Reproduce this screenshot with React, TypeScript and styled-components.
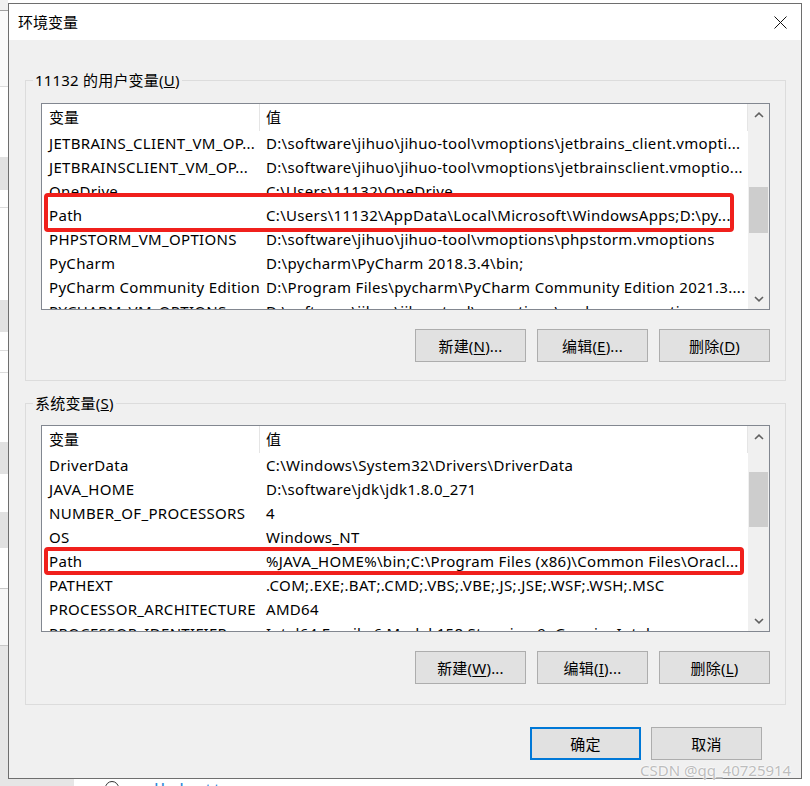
import React from "react";
import styled, { createGlobalStyle } from "styled-components";

type EnvVar = { name: string; value: string };

const userVars: EnvVar[] = [
  { name: "JETBRAINS_CLIENT_VM_OP...", value: "D:\\software\\jihuo\\jihuo-tool\\vmoptions\\jetbrains_client.vmopti..." },
  { name: "JETBRAINSCLIENT_VM_OP...", value: "D:\\software\\jihuo\\jihuo-tool\\vmoptions\\jetbrainsclient.vmoptio..." },
  { name: "OneDrive", value: "C:\\Users\\11132\\OneDrive" },
  { name: "Path", value: "C:\\Users\\11132\\AppData\\Local\\Microsoft\\WindowsApps;D:\\py..." },
  { name: "PHPSTORM_VM_OPTIONS", value: "D:\\software\\jihuo\\jihuo-tool\\vmoptions\\phpstorm.vmoptions" },
  { name: "PyCharm", value: "D:\\pycharm\\PyCharm 2018.3.4\\bin;" },
  { name: "PyCharm Community Edition", value: "D:\\Program Files\\pycharm\\PyCharm Community Edition 2021.3...." },
  { name: "PYCHARM_VM_OPTIONS", value: "D:\\software\\jihuo\\jihuo-tool\\vmoptions\\pycharm.vmoptions" },
];

const systemVars: EnvVar[] = [
  { name: "DriverData", value: "C:\\Windows\\System32\\Drivers\\DriverData" },
  { name: "JAVA_HOME", value: "D:\\software\\jdk\\jdk1.8.0_271" },
  { name: "NUMBER_OF_PROCESSORS", value: "4" },
  { name: "OS", value: "Windows_NT" },
  { name: "Path", value: "%JAVA_HOME%\\bin;C:\\Program Files (x86)\\Common Files\\Oracl..." },
  { name: "PATHEXT", value: ".COM;.EXE;.BAT;.CMD;.VBS;.VBE;.JS;.JSE;.WSF;.WSH;.MSC" },
  { name: "PROCESSOR_ARCHITECTURE", value: "AMD64" },
  { name: "PROCESSOR_IDENTIFIER", value: "Intel64 Family 6 Model 158 Stepping 9, GenuineIntel" },
];

// strip of the window lying behind the dialog (left edge)
const backSegments = [
  { h: 10, c: "#f0f0f0" },
  { h: 1, c: "#a0a0a0" },
  { h: 75, c: "#fafafa" },
  { h: 1, c: "#dcdcdc" },
  { h: 70, c: "#ffffff" },
  { h: 33, c: "#e1e1e1" },
  { h: 17, c: "#ffffff" },
  { h: 1, c: "#dcdcdc" },
  { h: 92, c: "#ffffff" },
  { h: 32, c: "#e1e1e1" },
  { h: 18, c: "#ffffff" },
  { h: 1, c: "#dcdcdc" },
  { h: 21, c: "#ffffff" },
  { h: 1, c: "#dcdcdc" },
  { h: 69, c: "#ffffff" },
  { h: 32, c: "#e1e1e1" },
  { h: 38, c: "#ffffff" },
  { h: 36, c: "#e1e1e1" },
  { h: 40, c: "#ffffff" },
  { h: 1, c: "#c8c8c8" },
  { h: 56, c: "#f7f7f7" },
  { h: 1, c: "#c8c8c8" },
  { h: 170, c: "#e6e6e6" },
];

const GlobalStyle = createGlobalStyle`
  html, body {
    margin: 0;
    padding: 0;
    background: #ffffff;
  }
  body {
    font-family: "Noto Sans", "Noto Sans CJK SC", sans-serif;
    color: #000;
  }
`;

const Chevron = ({ up }: { up?: boolean }) => (
  <svg width="10" height="6" viewBox="0 0 10 6">
    <polyline
      points={up ? "1,5 5,1.2 9,5" : "1,1 5,4.8 9,1"}
      fill="none"
      stroke="#606060"
      strokeWidth="1.6"
    />
  </svg>
);

const CloseIcon = () => (
  <svg width="13" height="13" viewBox="0 0 13 13">
    <path d="M0.5 0.5 L12.5 12.5 M12.5 0.5 L0.5 12.5" stroke="#111" strokeWidth="1" />
  </svg>
);

interface VarListProps {
  rows: EnvVar[];
  thumbTop: number;
  thumbHeight: number;
}

const VarList = ({ rows, thumbTop, thumbHeight }: VarListProps) => (
  <List>
    <Table>
      <HeaderRow>
        <HeadCell>变量</HeadCell>
        <HeadCell>值</HeadCell>
      </HeaderRow>
      {rows.map((r) => (
        <Row key={r.name}>
          <NameCell>{r.name}</NameCell>
          <ValueCell>{r.value}</ValueCell>
        </Row>
      ))}
    </Table>
    <ScrollBar>
      <ArrowBtn>
        <Chevron up />
      </ArrowBtn>
      <Track>
        <Thumb $top={thumbTop} $height={thumbHeight} />
      </Track>
      <ArrowBtn>
        <Chevron />
      </ArrowBtn>
    </ScrollBar>
  </List>
);

const App = () => {
  return (
    <>
      <GlobalStyle />
      <Desktop>
        <BackStrip>
          {backSegments.map((s, i) => (
            <BackSegment key={i} $h={s.h} $c={s.c} />
          ))}
        </BackStrip>
        <BackBottom>
          <BackGray />
          <BackCircle />
          <BackLink>ollabottom</BackLink>
        </BackBottom>

        <Window>
          <TitleBar>
            <Title>环境变量</Title>
            <CloseIcon />
          </TitleBar>
          <Body>
            <Group $top={40} $padTop={22} $padBottom={18}>
              <GroupLabel>
                11132 的用户变量(<u>U</u>)
              </GroupLabel>
              <VarList rows={userVars} thumbTop={62} thumbHeight={46} />
              <ButtonRow>
                <Button>
                  新建(<u>N</u>)...
                </Button>
                <Button>
                  编辑(<u>E</u>)...
                </Button>
                <Button>
                  删除(<u>D</u>)
                </Button>
              </ButtonRow>
            </Group>
            <Group $top={22} $padTop={21} $padBottom={20}>
              <GroupLabel>
                系统变量(<u>S</u>)
              </GroupLabel>
              <VarList rows={systemVars} thumbTop={25} thumbHeight={55} />
              <ButtonRow>
                <Button>
                  新建(<u>W</u>)...
                </Button>
                <Button>
                  编辑(<u>I</u>)...
                </Button>
                <Button>
                  删除(<u>L</u>)
                </Button>
              </ButtonRow>
            </Group>
            <Footer>
              <Button $primary>确定</Button>
              <Button>取消</Button>
            </Footer>
          </Body>
        </Window>

        <Marker style={{ left: 44, top: 193, width: 690, height: 39 }} />
        <Marker style={{ left: 44, top: 547, width: 700, height: 28 }} />
        <Watermark>CSDN @qq_40725914</Watermark>
      </Desktop>
    </>
  );
};

export default App;

const Desktop = styled.div`
  position: relative;
  width: 810px;
  height: 786px;
  overflow: hidden;
  background: #ffffff;
`;

const BackStrip = styled.div`
  position: absolute;
  left: 0;
  top: 0;
  width: 8px;
  height: 786px;
  display: flex;
  flex-direction: column;
`;

const BackSegment = styled.div<{ $h: number; $c: string }>`
  flex: none;
  height: ${(p) => p.$h}px;
  background: ${(p) => p.$c};
`;

const BackBottom = styled.div`
  position: absolute;
  left: 0;
  top: 779px;
  width: 810px;
  height: 7px;
  display: flex;
  align-items: flex-start;
  overflow: hidden;
`;

const BackGray = styled.div`
  width: 74px;
  height: 7px;
  background: #e6e6e6;
`;

const BackCircle = styled.div`
  margin: 2px 0 0 31px;
  width: 12px;
  height: 12px;
  border: 1.5px solid #333;
  border-radius: 50%;
`;

const BackLink = styled.span`
  margin: 1px 0 0 22px;
  font-size: 18px;
  line-height: 20px;
  color: #2f8ad8;
  letter-spacing: 2px;
`;

const Window = styled.div`
  position: absolute;
  left: 8px;
  top: 3px;
  width: 794px;
  height: 776px;
  box-sizing: border-box;
  border: 1px solid #6e6e6e;
  background: #f0f0f0;
  display: flex;
  flex-direction: column;
`;

const TitleBar = styled.div`
  flex: none;
  height: 36px;
  background: #ffffff;
  display: flex;
  align-items: center;
  justify-content: space-between;
  padding: 0 14px 0 9px;
`;

const Title = styled.span`
  font-size: 15px;
  line-height: 20px;
  color: #000;
`;

const Body = styled.div`
  flex: 1;
  display: flex;
  flex-direction: column;
  padding: 0 15px 0 16px;
`;

const Group = styled.div<{ $top: number; $padTop: number; $padBottom: number }>`
  position: relative;
  margin-top: ${(p) => p.$top}px;
  border: 1px solid #dcdcdc;
  padding: ${(p) => p.$padTop}px 15px ${(p) => p.$padBottom}px 15px;
`;

const GroupLabel = styled.span`
  position: absolute;
  left: 7px;
  top: -11px;
  padding: 0 2px;
  background: #f0f0f0;
  font-size: 15px;
  line-height: 20px;
  letter-spacing: 0.2px;
  color: #000;
`;

const List = styled.div`
  height: 207px;
  box-sizing: border-box;
  border: 1px solid #828790;
  background: #ffffff;
  display: flex;
  overflow: hidden;
`;

const Table = styled.div`
  flex: 1;
  min-width: 0;
  overflow: hidden;
`;

const HeaderRow = styled.div`
  display: grid;
  grid-template-columns: 218px 1fr;
  height: 27px;
`;

const HeadCell = styled.div`
  border-right: 1px solid #e5e5e5;
  padding-left: 7px;
  font-size: 15px;
  line-height: 27px;
  white-space: nowrap;
  overflow: hidden;

  &:last-child {
    padding-left: 6px;
  }
`;

const Row = styled.div`
  display: grid;
  grid-template-columns: 218px 1fr;
  height: 24px;
  font-size: 15px;
  line-height: 24px;
  letter-spacing: 0.32px;
`;

const NameCell = styled.div`
  padding-left: 7px;
  white-space: nowrap;
  overflow: hidden;
`;

const ValueCell = styled.div`
  padding-left: 6px;
  white-space: nowrap;
  overflow: hidden;
`;

const ScrollBar = styled.div`
  flex: none;
  width: 21px;
  background: #f0f0f0;
  display: flex;
  flex-direction: column;
`;

const ArrowBtn = styled.div`
  flex: none;
  height: 21px;
  display: flex;
  align-items: center;
  justify-content: center;
`;

const Track = styled.div`
  flex: 1;
`;

const Thumb = styled.div<{ $top: number; $height: number }>`
  margin: ${(p) => p.$top}px 1px 0 1px;
  height: ${(p) => p.$height}px;
  background: #cdcdcd;
`;

const ButtonRow = styled.div`
  display: flex;
  justify-content: flex-end;
  gap: 11px;
  margin-top: 19px;
`;

const Button = styled.div<{ $primary?: boolean }>`
  width: 111px;
  height: 33px;
  box-sizing: border-box;
  display: flex;
  align-items: center;
  justify-content: center;
  background: #e1e1e1;
  border: ${(p) => (p.$primary ? "2px solid #0078d7" : "1px solid #adadad")};
  font-size: 15px;
  letter-spacing: 0.2px;
  color: #000;
  cursor: default;

  u {
    text-underline-offset: 2px;
  }
`;

const Footer = styled.div`
  display: flex;
  justify-content: flex-end;
  gap: 10px;
  margin-top: 22px;
  padding-right: 24px;
`;

const Marker = styled.div`
  position: absolute;
  box-sizing: border-box;
  border: 4px solid #f0201c;
  border-radius: 4px;
  pointer-events: none;
`;

const Watermark = styled.div`
  position: absolute;
  left: 640px;
  top: 760px;
  font-size: 15px;
  line-height: 20px;
  color: #bdbdbd;
  text-shadow: 0 0 2px #ffffff, 0 0 2px #ffffff;
  white-space: nowrap;
`;
